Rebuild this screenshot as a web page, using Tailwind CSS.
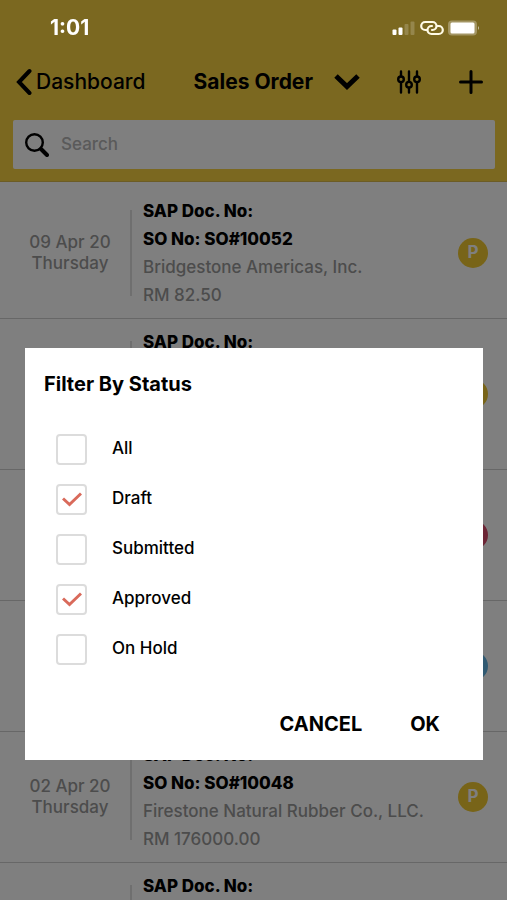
<!DOCTYPE html>
<html lang="en">

<head>
    <meta charset="UTF-8" />
    <meta name="viewport" content="width=device-width, initial-scale=1" />
    <title>Sales Order</title>
    <script src="https://cdn.jsdelivr.net/npm/@tailwindcss/browser@4"></script>
</head>

<body class="h-screen overflow-hidden bg-white font-[Inter,sans-serif] text-black">
    <!-- Page -->
    <div class="flex h-full flex-col overflow-hidden">
        <header class="shrink-0 border-b border-[#d8b84a] bg-[#f6d041] px-3 pt-14 pb-3">
            <nav class="flex h-13 items-center">
                <a href="#" class="flex items-center gap-1 pl-1 text-[21px] font-medium">
                    <svg class="h-7 w-4" viewBox="0 0 16 28" fill="none" stroke="currentColor" stroke-width="4" stroke-linecap="round">
                        <path d="M13.500 3 3 14l10.500 11" />
                    </svg>
                    Dashboard
                </a>
                <button class="ml-12 flex items-center gap-5 text-[21px] font-bold">
                    Sales Order
                    <svg class="h-6 w-7" viewBox="0 0 28 24" fill="none" stroke="currentColor" stroke-width="5">
                        <path d="M3 6 14 16.500 25 6" />
                    </svg>
                </button>
                <div class="ml-auto flex items-center gap-[38px] pr-3">
                    <button aria-label="Filter">
                        <svg class="size-6" viewBox="0 0 24 24" fill="none" stroke="currentColor" stroke-width="2.400" stroke-linecap="round">
                            <path d="M4 1.500V6M4 12.500V22.500M12 1.500V11.500M12 18V22.500M20 1.500V6M20 12.500V22.500" />
                            <circle cx="4" cy="9.300" r="2.800" />
                            <circle cx="12" cy="14.700" r="2.800" />
                            <circle cx="20" cy="9.300" r="2.800" />
                        </svg>
                    </button>
                    <button aria-label="Add">
                        <svg class="size-6" viewBox="0 0 24 24" fill="none" stroke="currentColor" stroke-width="3" stroke-linecap="round">
                            <path d="M12 1.500V22.500M1.500 12H22.500" />
                        </svg>
                    </button>
                </div>
            </nav>
            <label class="mt-3 ml-px flex h-[49px] items-center gap-3 rounded-xs bg-white px-3">
                <svg class="size-6 shrink-0" viewBox="0 0 24 24" fill="none" stroke="currentColor">
                    <circle cx="9.500" cy="9.500" r="8.300" stroke-width="2.400" />
                    <path d="M16 16 22 22" stroke-width="4" stroke-linecap="round" />
                </svg>
                <input type="search" aria-label="Search" placeholder="Search"
                    class="min-w-0 flex-1 text-[17px] font-medium outline-none placeholder:text-[#b4b4b4]" />
            </label>
        </header>

        <ul id="orders" class="pt-1.5"></ul>
    </div>

    <!-- Filter dialog -->
    <div class="fixed inset-0 flex flex-col bg-black/50 pt-87 pr-6 pl-[25px]">
        <form role="dialog" aria-labelledby="filterTitle" class="bg-white px-[19px] pt-6 pb-3.5">
            <h2 id="filterTitle" class="text-xl leading-6 font-bold">Filter By Status</h2>
            <div id="statuses" class="mt-7 flex flex-col pl-3"></div>
            <div class="mt-7 flex h-11 items-center justify-end gap-12 pr-6 text-xl font-bold">
                <button type="button">CANCEL</button>
                <button type="button">OK</button>
            </div>
        </form>
    </div>

    <!-- Status bar -->
    <div class="fixed inset-x-0 top-0 flex h-14 items-center justify-between pr-[27px] pl-[50px] text-white">
        <span class="text-[21px] font-bold">1:01</span>
        <div class="flex items-center gap-1">
            <svg class="h-4 w-6" viewBox="0 0 24 16" fill="currentColor">
                <rect x="0.500" y="9.500" width="4" height="5.500" rx="1" />
                <rect x="6.500" y="7.500" width="4" height="7.500" rx="1" />
                <rect x="12.500" y="4" width="4" height="11" rx="1" opacity=".2" />
                <rect x="18.500" y="1.500" width="4" height="13.500" rx="1" opacity=".2" />
            </svg>
            <svg class="h-4 w-6" viewBox="0 0 24 16" fill="none" stroke="#fffbe6" stroke-width="2.200" stroke-linecap="round">
                <path d="M7 10H5.200A4 4 0 0 1 5.200 2H12.500A4 4 0 0 1 12.500 10H12" />
                <path d="M17 6H18.800A4 4 0 0 1 18.800 14H11.500A4 4 0 0 1 11.500 6H12" />
            </svg>
            <svg class="h-4 w-8" viewBox="0 0 32 16" fill="currentColor">
                <rect y="0.500" width="29" height="15" rx="4" opacity=".3" />
                <rect x="2.500" y="2.500" width="24" height="11" rx="1.500" />
                <path d="M30 6Q32 8 30 10Z" opacity=".6" />
            </svg>
        </div>
    </div>

    <script>
        const orders = [
            { date: '09 Apr 20', day: 'Thursday', no: 'SO#10052', customer: 'Bridgestone Americas, Inc.', amount: '82.50', status: 'P', color: 'bg-[#f0c830]' },
            { date: '07 Apr 20', day: 'Tuesday', no: 'SO#10051', customer: 'Bridgestone Americas Tire Operations, LLC.', amount: '120.00', status: 'P', color: 'bg-[#f0c830]' },
            { date: '06 Apr 20', day: 'Monday', no: 'SO#10050', customer: 'Bridgestone Americas, Inc.', amount: '95.00', status: 'R', color: 'bg-[#d84a6a]' },
            { date: '03 Apr 20', day: 'Friday', no: 'SO#10049', customer: 'Bridgestone Americas, Inc.', amount: '60.00', status: 'D', color: 'bg-[#62b4e4]' },
            { date: '02 Apr 20', day: 'Thursday', no: 'SO#10048', customer: 'Firestone Natural Rubber Co., LLC.', amount: '176000.00', status: 'P', color: 'bg-[#f0c830]' },
            { date: '02 Apr 20', day: 'Thursday', no: 'SO#10047', customer: 'Bridgestone Americas, Inc.', amount: '45.00', status: 'P', color: 'bg-[#f0c830]' }
        ];

        document.getElementById('orders').innerHTML = orders.map(order => `
            <li class="flex border-b border-[#cfcfcf] pr-[19px] pl-2.5 text-[17px] font-medium text-[#999]">
                <div class="flex w-30 shrink-0 flex-col justify-center text-center leading-[21px]">
                    <span>${order.date}</span>
                    <span>${order.day}</span>
                </div>
                <div class="my-[22px] w-0.5 shrink-0 bg-[#dedede]"></div>
                <div class="flex flex-1 flex-col gap-2 py-[13px] pl-[11px] leading-5">
                    <p class="font-extrabold text-black">SAP Doc. No:</p>
                    <p class="font-extrabold text-black">SO No: ${order.no}</p>
                    <p>${order.customer}</p>
                    <p>RM ${order.amount}</p>
                </div>
                <span class="flex size-[30px] shrink-0 items-center justify-center self-center rounded-full font-bold text-white ${order.color}">${order.status}</span>
            </li>`).join('');

        const statuses = [
            { name: 'All', checked: false },
            { name: 'Draft', checked: true },
            { name: 'Submitted', checked: false },
            { name: 'Approved', checked: true },
            { name: 'On Hold', checked: false }
        ];

        document.getElementById('statuses').innerHTML = statuses.map(status => `
            <label class="flex h-[50px] items-center gap-[25px] text-[17px] font-medium">
                <span class="grid size-[31px] place-items-center">
                    <input type="checkbox" ${status.checked ? 'checked' : ''}
                        class="peer col-start-1 row-start-1 size-[31px] appearance-none rounded-sm border-2 border-[#dcdcdc]" />
                    <svg class="pointer-events-none invisible col-start-1 row-start-1 h-4 w-5 peer-checked:visible" viewBox="0 0 20 16" fill="none" stroke="#d96a5b" stroke-width="3">
                        <path d="M1 7.500 7.500 13.500 19 2.500" />
                    </svg>
                </span>
                ${status.name}
            </label>`).join('');
    </script>
</body>

</html>
